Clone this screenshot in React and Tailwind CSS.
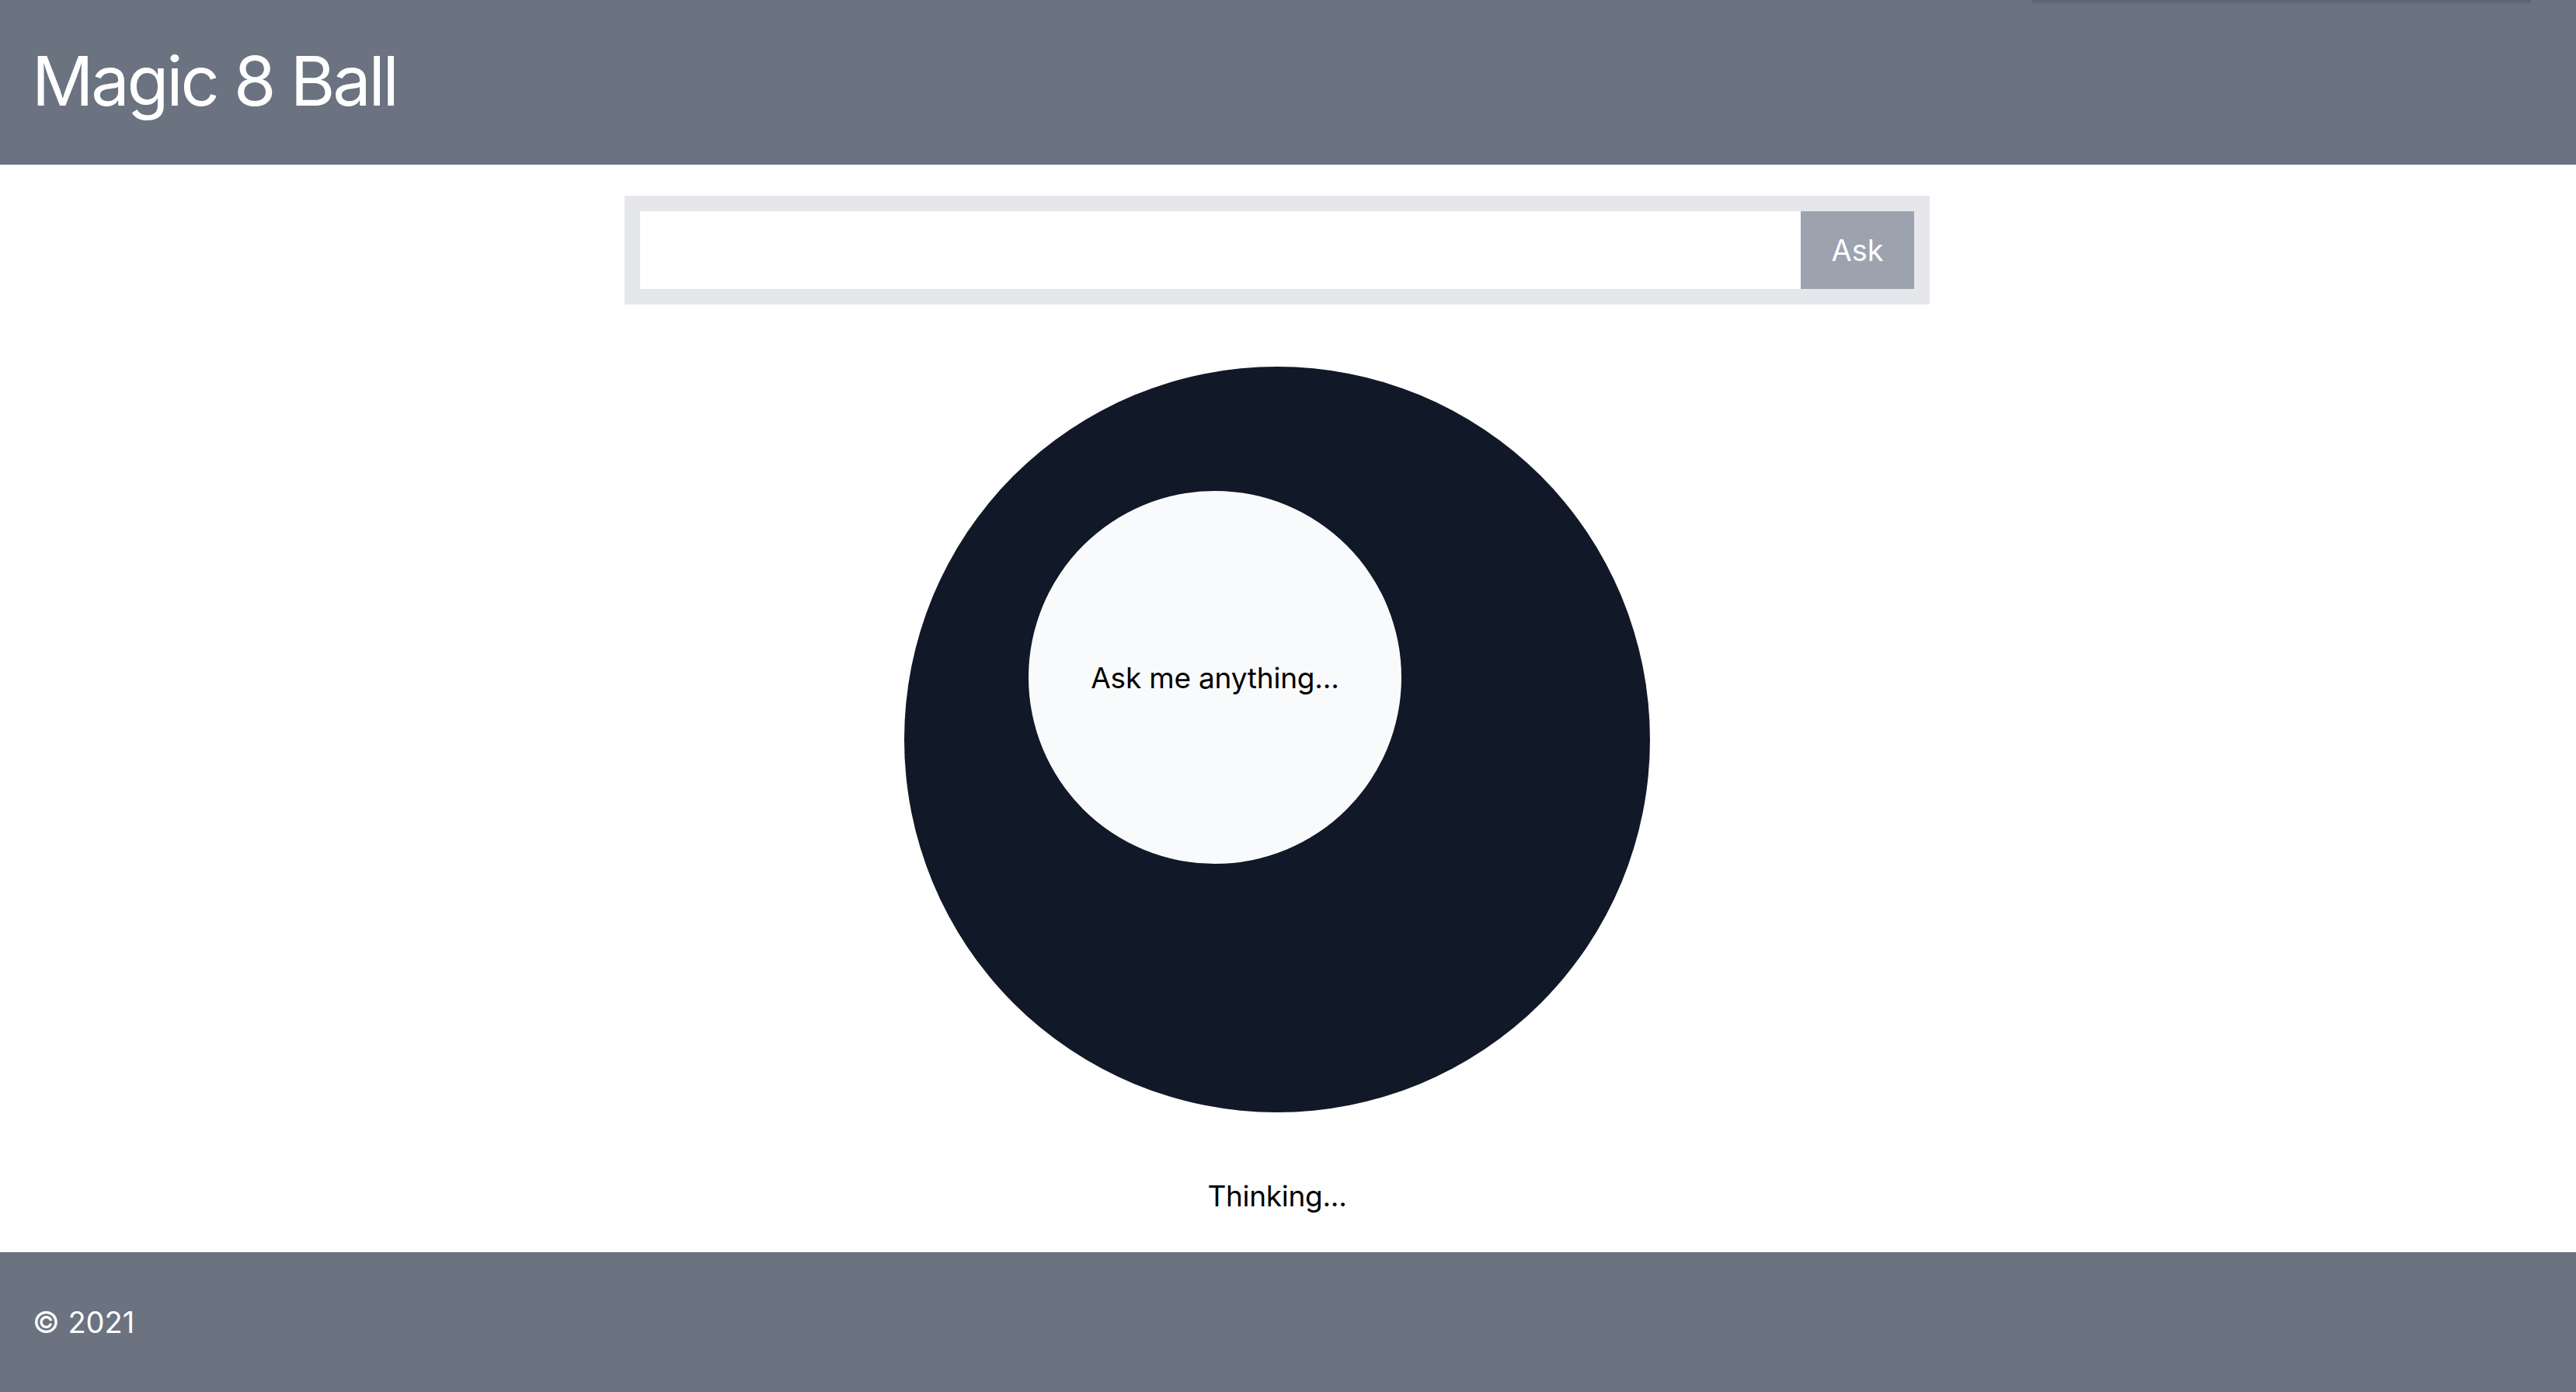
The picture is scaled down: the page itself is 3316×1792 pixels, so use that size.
export default function App() {
  return (
    <div
      className="min-h-screen flex flex-col bg-white relative"
      style={{ fontFamily: 'Inter, "Noto Sans", sans-serif' }}
    >
      <div className="absolute top-0 left-[2616px] w-[642px] h-[6px] bg-gradient-to-b from-black/15 to-transparent pointer-events-none" />
      <header className="h-[212px] bg-[#6b7280] flex items-center pl-[41px] shrink-0">
        <h1 className="text-white text-[88px] leading-none font-normal tracking-[-3.2px] -translate-y-[2px]">Magic 8 Ball</h1>
      </header>

      <main className="flex-1 flex flex-col items-center pt-[40px] pr-[28px]">
        <div className="w-[1680px] h-[140px] bg-[#e5e7eb] p-[20px] flex">
          <input
            type="text"
            className="flex-1 h-[100px] bg-white outline-none px-4 text-[38px]"
          />
          <button className="w-[146px] h-[100px] bg-[#9ca3af] text-white text-[38px] leading-none">
            Ask
          </button>
        </div>

        <div className="mt-[80px] w-[960px] h-[960px] rounded-full bg-[#111827] p-[160px]">
          <div className="w-[480px] h-[480px] rounded-full bg-[#f9fafb] flex items-center justify-center">
            <span className="text-black text-[37px] leading-none tracking-[-0.2px]">Ask me anything...</span>
          </div>
        </div>

        <p className="mt-[80px] text-black text-[37px] leading-[56px] tracking-[-0.3px]">Thinking...</p>
      </main>

      <footer className="h-[180px] bg-[#6b7280] flex items-center pl-[42px] shrink-0">
        <span className="text-white text-[38px] leading-none">© 2021</span>
      </footer>
    </div>
  );
}
